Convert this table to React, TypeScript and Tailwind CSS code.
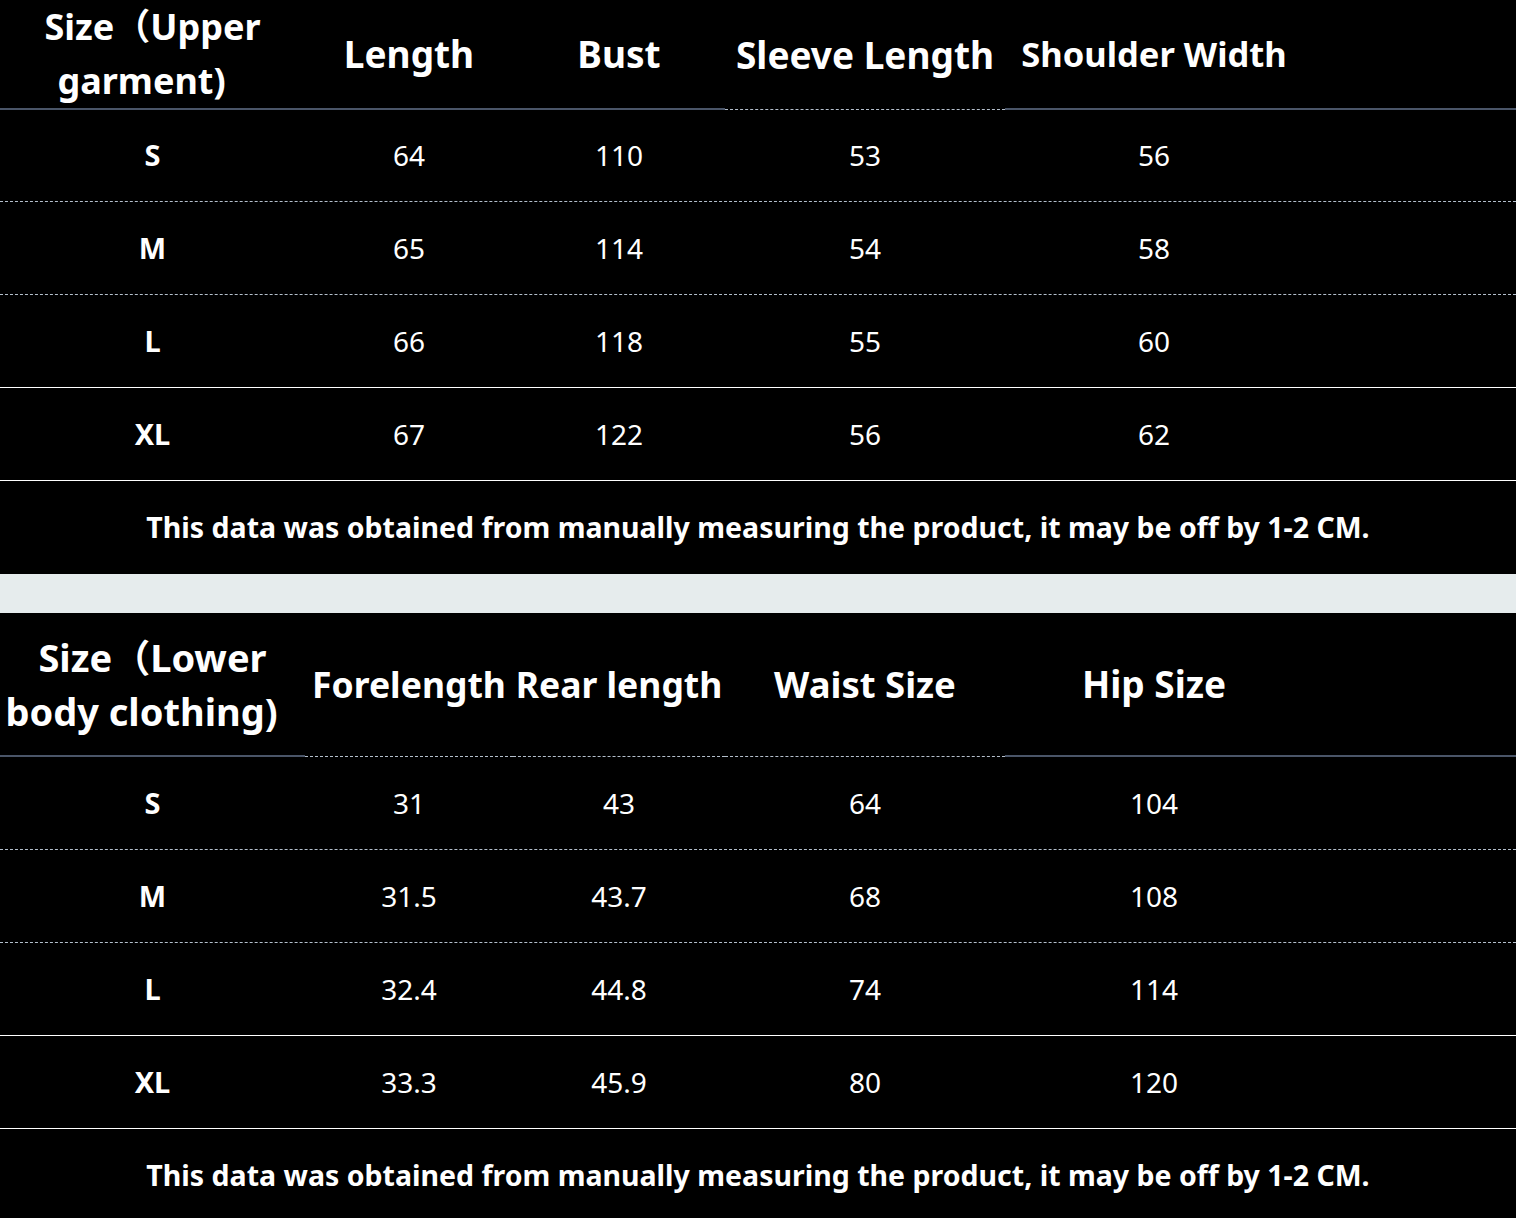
const font = { fontFamily: '"Noto Sans", "Noto Sans CJK SC", sans-serif' };

const cols = "grid grid-cols-[305px_208px_212px_280px_298px_1fr]";

type Row = { size: string; values: string[]; line: "dashed" | "solid" };

const upperRows: Row[] = [
  { size: "S", values: ["64", "110", "53", "56"], line: "dashed" },
  { size: "M", values: ["65", "114", "54", "58"], line: "dashed" },
  { size: "L", values: ["66", "118", "55", "60"], line: "solid" },
  { size: "XL", values: ["67", "122", "56", "62"], line: "solid" },
];

const lowerRows: Row[] = [
  { size: "S", values: ["31", "43", "64", "104"], line: "dashed" },
  { size: "M", values: ["31.5", "43.7", "68", "108"], line: "dashed" },
  { size: "L", values: ["32.4", "44.8", "74", "114"], line: "solid" },
  { size: "XL", values: ["33.3", "45.9", "80", "120"], line: "solid" },
];

function DataRow({ row }: { row: Row }) {
  return (
    <div
      className={`${cols} h-[93px] items-center border-b ${
        row.line === "dashed" ? "border-dashed border-[#b4bfcc]" : "border-solid border-white"
      }`}
    >
      <div className="text-center text-[29px] font-bold">{row.size}</div>
      {row.values.map((v, i) => (
        <div key={i} className="text-center text-[28px]">
          {v}
        </div>
      ))}
      <div />
    </div>
  );
}

function Footer() {
  return (
    <div className="h-[93px] flex items-center justify-center text-[28.5px] font-bold whitespace-nowrap">
      This data was obtained from manually measuring the product, it may be off by 1-2 CM.
    </div>
  );
}

export default function App() {
  return (
    <div className="w-[1516px] h-[1218px] overflow-hidden bg-black text-white" style={font}>
      {/* Upper garment */}
      <div className={`${cols} h-[109px] items-stretch`}>
        <div className="flex flex-col items-center justify-center text-center text-[36px] font-bold leading-[54px] whitespace-nowrap border-b-2 border-[#4a5568]">
          <div>Size（Upper</div>
          <div className="mr-[22px]">garment)</div>
        </div>
        <div className="flex items-center justify-center text-[37px] font-bold border-b-2 border-[#4a5568]">Length</div>
        <div className="flex items-center justify-center text-[37px] font-bold border-b-2 border-[#4a5568]">Bust</div>
        <div className="flex items-center justify-center text-[37px] font-bold whitespace-nowrap border-b border-dashed border-[#b4bfcc]">
          Sleeve Length
        </div>
        <div className="flex items-center justify-center text-[34.5px] font-bold whitespace-nowrap border-b-2 border-[#4a5568]">
          Shoulder Width
        </div>
        <div className="border-b-2 border-[#4a5568]" />
      </div>
      {upperRows.map((r) => (
        <DataRow key={r.size} row={r} />
      ))}
      <Footer />

      <div className="h-[39px] bg-[#e6eced]" />

      {/* Lower body clothing */}
      <div className={`${cols} h-[144px] items-stretch`}>
        <div className="flex flex-col items-center justify-center text-center text-[38px] font-bold leading-[54px] whitespace-nowrap border-b-2 border-[#4a5568]">
          <div>Size（Lower</div>
          <div className="mr-[22px]">body clothing)</div>
        </div>
        <div className="flex items-center justify-center text-[35.5px] font-bold whitespace-nowrap border-b border-dashed border-[#b4bfcc]">
          Forelength
        </div>
        <div className="flex items-center justify-center text-[35.5px] font-bold whitespace-nowrap border-b border-dashed border-[#b4bfcc]">
          Rear length
        </div>
        <div className="flex items-center justify-center text-[36.5px] font-bold whitespace-nowrap border-b border-dashed border-[#b4bfcc]">
          Waist Size
        </div>
        <div className="flex items-center justify-center text-[37px] font-bold whitespace-nowrap border-b-2 border-[#4a5568]">
          Hip Size
        </div>
        <div className="border-b-2 border-[#4a5568]" />
      </div>
      {lowerRows.map((r) => (
        <DataRow key={r.size} row={r} />
      ))}
      <Footer />
    </div>
  );
}
